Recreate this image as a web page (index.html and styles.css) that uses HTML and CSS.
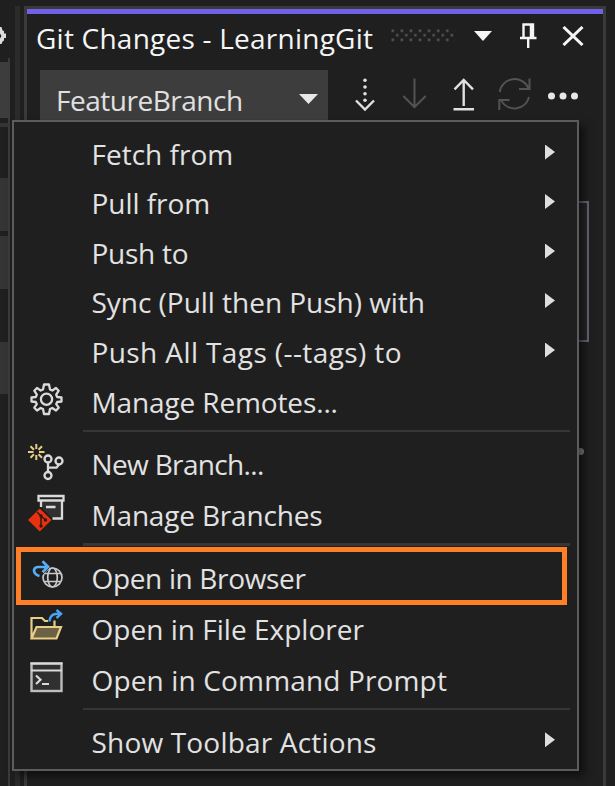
FILE: index.html
```
<!DOCTYPE html>
<html lang="en">
<head>
<meta charset="utf-8">
<title>Git Changes</title>
<link rel="stylesheet" href="styles.css">
</head>
<body>
<div class="window">
  <aside class="dock">
    <svg class="dock-gear" width="8" height="20" viewBox="0 0 8 20"><path d="M0 4V1H1.500L2.500 4.500L4 5V7.500H6V12H4V14.500L2.500 15.500L1.500 18H0V12.500L1.500 10L0 7.500Z" fill="#dcdcdc"/></svg>
    <div class="block top"></div>
    <div class="block line"></div>
    <div class="block b1"></div>
    <div class="block b2"></div>
    <div class="block b3"></div>
  </aside>
  <div class="splitter"></div>
  <main class="panel">
    <header class="titlebar">
      <h1 class="title">Git Changes - LearningGit</h1>
      <svg class="grip" width="64" height="14" viewBox="0 0 64 14">
        <defs><pattern id="dots" width="9.1" height="9.1" patternUnits="userSpaceOnUse"><rect x=".5" y=".5" width="2.500" height="2.500" fill="#555"/><rect x="5" y="5" width="2.500" height="2.500" fill="#555"/></pattern></defs>
        <rect width="64" height="13" fill="url(#dots)"/>
      </svg>
      <svg class="caret" width="18" height="10" viewBox="0 0 18 10"><path d="M0 0H18L9 10Z" fill="#f5f5f5"/></svg>
      <svg class="pin" width="17" height="26" viewBox="0 0 17 26"><path d="M3.500 15V1.500H13V15M0 15H16.500M8.200 15V25" fill="none" stroke="#f5f5f5" stroke-width="2.400"/><path d="M11.500 1.500V15" stroke="#f5f5f5" stroke-width="3.500"/></svg>
      <svg class="close" width="22" height="20" viewBox="0 0 22 20"><path d="M1.500 1L20.500 19M20.500 1L1.500 19" stroke="#f5f5f5" stroke-width="3"/></svg>
    </header>
    <div class="toolbar">
      <div class="combo"><span class="branch">FeatureBranch</span><svg width="19" height="10" viewBox="0 0 19 10"><path d="M0 0H19L9.500 10Z" fill="#e8e8e8"/></svg></div>
      <svg class="actions" width="230" height="34" viewBox="350 78 230 34" fill="none" stroke-width="2">
        <path d="M356 100.500L365 109.500L374 100.500" stroke="#e0e0e0" stroke-width="2.400"/>
        <g fill="#e0e0e0"><circle cx="365" cy="80.300" r="1.800"/><circle cx="365" cy="87" r="1.800"/><circle cx="365" cy="93.700" r="1.800"/><circle cx="365" cy="100.300" r="1.800"/></g>
        <path d="M414.500 78.500V107M403.300 96L414.500 107L425.700 96" stroke="#535353"/>
        <path d="M463.700 106V80M454.500 89.300L463.700 80L473 89.300M453.500 109.200H474" stroke="#e0e0e0" stroke-width="2.400"/>
        <path d="M499.700 92A15 15 0 0 1 528.500 88.500M529.500 78.500V89H519M529 97A15 15 0 0 1 501.500 101M499.300 110V100H509.500" stroke="#535353"/>
        <g fill="#e8e8e8"><circle cx="551.500" cy="96" r="3.500"/><circle cx="563" cy="96" r="3.500"/><circle cx="574.500" cy="96" r="3.500"/></g>
      </svg>
    </div>
    <div class="message-box"></div>
    <div class="dot"></div>
  </main>
</div>

<nav class="menu">
  <div class="item"><span class="label fetch">Fetch from</span><i class="arrow"></i></div>
  <div class="item"><span class="label pull">Pull from</span><i class="arrow"></i></div>
  <div class="item"><span class="label push">Push to</span><i class="arrow"></i></div>
  <div class="item"><span class="label sync">Sync (Pull then Push) with</span><i class="arrow"></i></div>
  <div class="item"><span class="label tags">Push All Tags (--tags) to</span><i class="arrow"></i></div>
  <div class="item tall">
    <svg class="icon" width="44" height="44" viewBox="24 377 44 44" fill="none" stroke="#dadada" stroke-width="2.300"><circle cx="46.500" cy="399.200" r="5.600"/><path stroke-linejoin="round" d="M44 384.500H49L50 389.500L52.300 390.500L56 388L58.700 390.700L56.200 394.700L57.200 397L61.500 397.500V401.500L57.200 402L56.200 404.200L58.700 407.700L56 410.500L52.300 408L50 409L49 414H44L43 409L40.700 408L37 410.500L34.300 407.700L36.800 404.200L35.800 402L31.500 401.500V397.500L35.800 397L36.800 394.700L34.300 390.700L37 388L40.700 390.500L43 389.500Z"/></svg>
    <span class="label remotes">Manage Remotes...</span>
  </div>
  <hr class="rule">
  <div class="item tall">
    <svg class="icon" width="44" height="44" viewBox="24 439 44 44" fill="none"><path stroke="#e8cd86" stroke-width="2" d="M36.300 444V449M36.300 455V460M28 452H33.500M39 452H44.500M30.500 446.200L34 449.700M38.500 454.200L42 457.700M42 446.200L38.500 449.700M34 454.200L30.500 457.700"/><g stroke="#dadada" stroke-width="2.300"><circle cx="48" cy="459" r="3.500"/><circle cx="59" cy="461" r="3.500"/><circle cx="48" cy="475.500" r="3.500"/><path d="M48 462.500V472M59 464.500L56.500 467.700H48"/></g></svg>
    <span class="label new">New Branch...</span>
  </div>
  <div class="item tall">
    <svg class="icon" width="44" height="44" viewBox="24 490 44 44"><path d="M41 502H62V518H52L41 507Z" fill="#303030"/><path d="M38.500 496H63.500V500.500H38.500ZM41 501V507M62 501V518.500H52.500M46 507H55.500" fill="none" stroke="#dadada" stroke-width="2.300"/><path d="M39.700 508.500L51.500 520L39.700 531.500L28 520Z" fill="#e8310f"/><path d="M37 512L41 516V526M41 516L45.500 520" fill="none" stroke="#301812" stroke-width="1.500"/><g fill="#301812"><circle cx="41" cy="516" r="1.700"/><circle cx="41" cy="526" r="1.700"/><circle cx="45.500" cy="520" r="1.700"/></g></svg>
    <span class="label manage">Manage Branches</span>
  </div>
  <hr class="rule heavy">
  <div class="item tall">
    <svg class="icon" width="44" height="44" viewBox="24 552.500 44 44" fill="none"><g stroke="#c8c8c8" stroke-width="1.700"><circle cx="52.500" cy="577" r="9.500"/><ellipse cx="52.500" cy="577" rx="4.800" ry="9.500"/><path d="M44 573H61M44 581H61"/></g><path d="M29 557H49V568L42 575H36Z" fill="#1f1f1f"/><path d="M39.500 575.500C33 574 32 567 38 566.500H47M42.500 560.800L48 566.300L42.500 571.800" stroke="#58aef5" stroke-width="2.700"/></svg>
    <span class="label browser">Open in Browser</span>
  </div>
  <div class="item tall">
    <svg class="icon" width="44" height="44" viewBox="24 603.500 44 44" fill="none"><path d="M36.500 626.500H61L56.500 638H31.500Z" fill="#6c6145"/><path d="M31.500 638V617.500H42L45 620.500H48M54.500 620V626M31.500 638L36.500 626.500H61L56.500 638Z" stroke="#e8cd86" stroke-width="2.200"/><path d="M49.500 621C50 614 54 613 61 613M56.500 609.500L61 613.300L56.500 617.500" stroke="#4aa3f0" stroke-width="2.400"/></svg>
    <span class="label explorer">Open in File Explorer</span>
  </div>
  <div class="item tall">
    <svg class="icon" width="44" height="44" viewBox="24 654.500 44 44" fill="none"><rect x="31.500" y="663" width="30" height="27.500" fill="#303030" stroke="#bdbdbd" stroke-width="2.400"/><path d="M30.500 663H62.500M31 670H62" stroke="#dadada" stroke-width="2.200"/><path d="M36 675L40.500 679.300L36 683.500M42 683.500H49" stroke="#dadada" stroke-width="2.200"/></svg>
    <span class="label prompt">Open in Command Prompt</span>
  </div>
  <hr class="rule final">
  <div class="item last"><span class="label show">Show Toolbar Actions</span><i class="arrow"></i></div>
  <div class="highlight"></div>
</nav>
</body>
</html>
```
FILE: styles.css
```
* { box-sizing: border-box; }
body {
  margin: 0;
  width: 615px;
  height: 786px;
  overflow: hidden;
  position: relative;
  background: #1f1f1f;
  color: #e2e2e2;
  font: 28px "Open Sans", "Noto Sans", sans-serif;
}
svg { display: block; flex: none; }

.window { display: flex; height: 786px; }

/* neighbouring dock on the left edge */
.dock { width: 10px; flex: none; border-right: 2px solid; padding-top: 26px; border-image: linear-gradient(#1f1f1f 59px, #3a3a3a 59px) 1; }
.dock-gear { margin-bottom: 16px; }
.block { width: 8px; background: #343434; }
.block.top { height: 56px; width: 10px; background: #3d3d3d; }
.block.line { height: 4px; margin-top: 5px; }
.block.b1 { height: 53px; margin-top: 51px; }
.block.b2 { height: 53px; margin-top: 5px; }
.block.b3 { height: 52px; margin-top: 53px; }
.splitter { width: 5px; flex: none; margin: 6px 4px 0 5px; background: #2b2b2b; }

.panel { width: 582px; flex: none; margin-top: 6px; border: 3px solid #3a3a3a; border-bottom: 0; position: relative; }
.titlebar { height: 58px; border-top: 5px solid #7160e8; display: flex; align-items: flex-start; padding-left: 9px; }
.title { margin: 3px 0 0; width: 355px; font-size: 28px; font-weight: 400; line-height: 42px; letter-spacing: .23px; color: #f5f5f5; white-space: nowrap; }
.grip { margin-top: 15px; }
.caret { margin: 17px 0 0 19px; }
.pin { margin: 9px 0 0 28px; }
.close { margin: 12px 0 0 25px; }

.toolbar { display: flex; padding: 3px 0 0 13px; }
.combo { width: 288px; height: 54px; background: #3d3d3d; display: flex; justify-content: space-between; padding: 0 10px 0 16px; }
.combo svg { margin-top: 24px; }
.branch { line-height: 60px; letter-spacing: -.48px; color: #e0e0e0; }
.actions { margin: 8px 0 0 22px; }

.message-box { position: absolute; top: 192px; right: 14px; width: 60px; height: 141px; border: 2px solid #686575; background: #262626; }
.dot { position: absolute; left: 550px; top: 439px; width: 7px; height: 7px; border-radius: 50%; background: #888; }

.menu {
  position: absolute;
  left: 12px;
  top: 120px;
  width: 567px;
  height: 651px;
  padding-top: 7.750px;
  border: 2px solid #5c5c5c;
  background: #1f1f1f;
  box-shadow: 5px 5px 8px rgba(0, 0, 0, .55);
}
.item { display: flex; height: 49.500px; padding-left: 77.500px; padding-right: 22px; align-items: center; justify-content: space-between; }
.item.tall { height: 51px; padding-left: 10px; justify-content: flex-start; align-items: flex-start; }
.item.last { height: 50px; }
.label { line-height: 49.500px; white-space: nowrap; }
.tall .label { line-height: 51px; margin-left: 23.500px; }
.arrow { width: 10px; height: 15px; margin-top: -5px; background: #dedede; clip-path: polygon(0 0, 100% 50%, 0 100%); }
.rule { height: 2px; margin: 1.750px 7px 7px 69px; border: 0; background: #363636; }
.rule.heavy { height: 3px; margin: 1.500px 7px 7px 69px; }
.rule.final { margin-top: 2.750px; }

.highlight { position: absolute; left: 2px; top: 425px; width: 551px; height: 58px; border: 5px solid #ff7f27; }

.fetch { letter-spacing: 0; }
.pull { letter-spacing: -.05px; }
.push { letter-spacing: -.25px; }
.sync { letter-spacing: -.03px; }
.tags { letter-spacing: .4px; }
.remotes { letter-spacing: -.13px; }
.new { letter-spacing: -.65px; }
.manage { letter-spacing: -.18px; }
.browser { letter-spacing: -.34px; }
.explorer { letter-spacing: .02px; }
.prompt { letter-spacing: .15px; }
.show { letter-spacing: .18px; }
```
